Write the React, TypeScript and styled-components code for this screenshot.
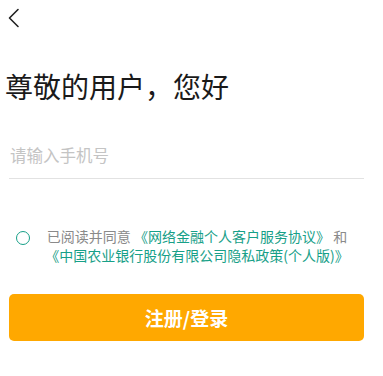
import React, { useState } from "react";
import styled, { createGlobalStyle } from "styled-components";

const GlobalStyle = createGlobalStyle`
  html, body {
    margin: 0;
    padding: 0;
    background: #ffffff;
  }

  body {
    font-family: "Noto Sans CJK SC", "Noto Sans", sans-serif;
  }

  * {
    box-sizing: border-box;
  }
`;

const App = () => {
  const [phone, setPhone] = useState("");
  const [agreed, setAgreed] = useState(false);

  return (
    <>
      <GlobalStyle />
      <Page>
        <Header>
          <BackButton aria-label="返回">
            <svg width="12" height="20" viewBox="0 0 12 20" fill="none">
              <path
                d="M10 1.5 L1.5 10 L10 18.5"
                stroke="#222"
                strokeWidth="1.6"
                strokeLinecap="round"
                strokeLinejoin="round"
              />
            </svg>
          </BackButton>
        </Header>

        <Title>尊敬的用户，您好</Title>

        <InputField>
          <PhoneInput
            type="tel"
            placeholder="请输入手机号"
            value={phone}
            onChange={(e) => setPhone(e.target.value)}
          />
        </InputField>

        <AgreementRow>
          <Radio
            $checked={agreed}
            onClick={() => setAgreed(!agreed)}
            aria-label="同意协议"
          />
          <AgreementText>
            已阅读并同意 <Link>《网络金融个人客户服务协议》</Link> 和
            <br />
            <Link>《中国农业银行股份有限公司隐私政策(个人版)》</Link>
          </AgreementText>
        </AgreementRow>

        <SubmitButton>注册/登录</SubmitButton>
      </Page>
    </>
  );
};

export default App;

const Page = styled.div`
  display: flex;
  flex-direction: column;
  width: 383px;
  padding: 0 19px 0 9px;
`;

const Header = styled.div`
  display: flex;
  align-items: center;
  height: 36px;
`;

const BackButton = styled.button`
  display: flex;
  align-items: center;
  margin: 0 0 0 -1px;
  padding: 0;
  border: none;
  background: none;
`;

const Title = styled.h1`
  margin: 30px 0 0 -4px;
  font-size: 28px;
  font-weight: 400;
  line-height: 40px;
  color: #1a1a1a;
`;

const InputField = styled.div`
  margin-top: 37px;
  padding-bottom: 11px;
  border-bottom: 1px solid #e2e2e2;
`;

const PhoneInput = styled.input`
  display: block;
  width: 100%;
  height: 24px;
  padding: 0 0 0 1px;
  border: none;
  outline: none;
  font-family: inherit;
  font-size: 16.5px;
  line-height: 24px;
  color: #222;

  &::placeholder {
    color: #c4c4c4;
  }
`;

const AgreementRow = styled.div`
  display: flex;
  align-items: flex-start;
  gap: 7px;
  margin-top: 48px;
  padding: 0 7px;
`;

const Radio = styled.button<{ $checked: boolean }>`
  flex: none;
  width: 14px;
  height: 14px;
  margin-top: 4px;
  padding: 0;
  border: 1.5px solid #17a088;
  border-radius: 50%;
  background: ${(p) => (p.$checked ? "#17a088" : "transparent")};
`;

const AgreementText = styled.p`
  flex: 1;
  margin: 0;
  font-size: 14px;
  line-height: 19px;
  text-align: center;
  color: #8a8a8a;
`;

const Link = styled.span`
  color: #17a088;
`;

const SubmitButton = styled.button`
  height: 47px;
  margin-top: 29px;
  border: none;
  border-radius: 5px;
  background: #ffa800;
  font-family: inherit;
  font-size: 19px;
  font-weight: 700;
  color: #ffffff;
`;
